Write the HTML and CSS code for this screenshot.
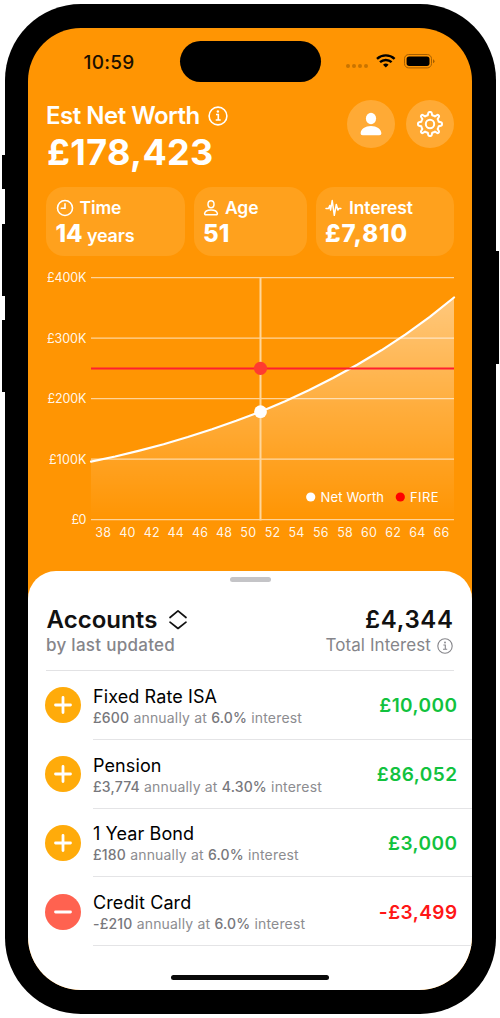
FILE: index.html
```html
<!DOCTYPE html>
<html lang="en">
<head>
<meta charset="utf-8">
<title>Net Worth</title>
<link rel="stylesheet" href="styles.css">
</head>
<body>
<main class="phone">
  <i class="key key-action"></i><i class="key key-up"></i><i class="key key-down"></i><i class="key key-power"></i>
  <div class="screen">
    <header class="status">
      <time class="clock">10:59</time>
      <div class="island"></div>
      <div class="indicators">
        <svg width="90" height="16" viewBox="0 0 90 16">
          <g fill="#c97400"><circle cx="2" cy="13" r="2"/><circle cx="8" cy="13" r="2"/><circle cx="14" cy="13" r="2"/><circle cx="20" cy="13" r="2"/></g>
          <g fill="none" stroke="#000" stroke-width="2.4"><path d="M31 5.800a13 13 0 0 1 17.600 0"/><path d="M34 9.200a8.600 8.600 0 0 1 11.600 0"/></g>
          <path d="M39.800 14.500l-2.800-2.800a4.300 4.300 0 0 1 5.600 0z" fill="#000"/>
          <rect x="58.500" y="1.500" width="27" height="13.400" rx="4.200" fill="none" stroke="#a65f00"/>
          <rect x="60.600" y="3.500" width="22.900" height="9.400" rx="2.600"/>
          <path d="M87 6.200v4q1.500-.6 1.500-2t-1.500-2z" fill="#a65f00"/>
        </svg>
      </div>
    </header>

    <section class="summary">
      <div>
        <h1 class="title"><span class="title-text">Est Net Worth</span>
          <svg width="20" height="20" viewBox="0 0 20 20" fill="none" stroke="#fff" stroke-width="1.600"><circle cx="10" cy="10" r="8.900"/><path d="M8 8.500h2.300v5.300M7.700 14h5"/><circle cx="9.900" cy="5.500" r="1.200" fill="#fff" stroke="none"/></svg>
        </h1>
        <p class="worth">£178,423</p>
      </div>
      <div class="actions">
        <button class="round" aria-label="Profile"><svg width="48" height="48" viewBox="0 0 48 48" fill="#fff"><ellipse cx="24" cy="18.500" rx="5.100" ry="5.700"/><path d="M15.700 35.200q-2.300 0-2.100-2c.3-4.100 4.700-7.200 10.400-7.200s10.100 3.100 10.400 7.200q.2 2-2.100 2z"/></svg></button>
        <button class="round" aria-label="Settings"><svg width="48" height="48" viewBox="0 0 48 48" fill="none" stroke="#fff" stroke-width="2" stroke-linejoin="round"><circle cx="24" cy="24" r="4.200"/><path id="gear" d="M22.300 13Q22.500 12 23.400 12h1.200Q25.500 12 25.700 13L26.200 15.300Q28 15.700 29 16.400L31 15.100Q31.800 14.600 32.500 15.300L32.800 15.500Q33.400 16.200 32.900 17L31.600 19Q32.300 20 32.700 21.800L35 22.300Q36 22.500 36 23.400v1.200Q36 25.500 35 25.700L32.700 26.200Q32.300 28 31.600 29L32.900 31Q33.400 31.800 32.700 32.500L32.500 32.700Q31.800 33.400 31 32.900L29 31.600Q28 32.300 26.200 32.700L25.700 35Q25.500 36 24.600 36h-1.200Q22.500 36 22.300 35L21.800 32.700Q20 32.300 19 31.600L17 32.900Q16.200 33.400 15.500 32.700L15.300 32.500Q14.600 31.800 15.100 31L16.400 29Q15.700 28 15.300 26.200L13 25.700Q12 25.500 12 24.600v-1.200Q12 22.500 13 22.300L15.300 21.800Q15.700 20 16.400 19L15.100 17Q14.600 16.200 15.300 15.500L15.500 15.300Q16.200 14.600 17 15.100L19 16.400Q20 15.700 21.800 15.300z"/></svg></button>
      </div>
    </section>

    <section class="cards">
      <article class="card">
        <h2 class="card-label"><svg width="18" height="18" viewBox="0 0 18 18" fill="none" stroke="#fff" stroke-width="1.600" stroke-linecap="round"><circle cx="9" cy="9" r="7.500"/><path d="M9 4.700v4.600H5.300"/></svg><span class="t-time">Time</span></h2>
        <p class="card-value"><span class="v-time">14</span> <small>years</small></p>
      </article>
      <article class="card">
        <h2 class="card-label"><svg class="age-icon" width="16" height="18" viewBox="0 0 16 18" fill="none" stroke="#fff" stroke-width="1.500"><ellipse cx="8" cy="5.300" rx="3" ry="3.500"/><path d="M2.900 15.700q-1.400 0-1.300-1.200c.3-2.200 2.800-3.600 6.400-3.600s6.100 1.400 6.400 3.600q.1 1.200-1.300 1.200z"/></svg><span class="t-age">Age</span></h2>
        <p class="card-value">51</p>
      </article>
      <article class="card">
        <h2 class="card-label"><svg width="18" height="18" viewBox="0 0 18 18" fill="none" stroke="#fff" stroke-width="1.500" stroke-linejoin="round" stroke-linecap="round"><path d="M1 9.500h2.600l1.200-3 .8 4.500L7.200 1.500 9.300 16.300 11.300 5.500l1.600 5.500 1-1.500h2"/></svg><span class="t-interest">Interest</span></h2>
        <p class="card-value v-interest">£7,810</p>
      </article>
    </section>

    <svg class="chart" width="416" height="280" viewBox="44 265 416 280">
      <defs><linearGradient id="area" x1="0" y1="297" x2="0" y2="519" gradientUnits="userSpaceOnUse"><stop offset="0" stop-color="#fff" stop-opacity=".48"/><stop offset=".5" stop-color="#fff" stop-opacity=".23"/><stop offset="1" stop-color="#fff" stop-opacity="0"/></linearGradient></defs>
      <path fill="url(#area)" d="M91 461.600L115.200 456.500 139.400 450.600 163.600 444.200 187.800 437 212 429.200 236.200 420.800 260.400 411.700 284.600 401.500 308.800 390.300 333 378 357.200 364.700 381.400 350.300 405.600 334.300 429.800 316.900 454 297.500V519.500H91z"/>
      <path class="grid" d="M91 277.700H454M91 338.200H454M91 398.700H454M91 459.200H454M91 519.700H454"/>
      <path d="M260.500 277V520.500" stroke="#ffd69a" stroke-width="2"/>
      <path d="M91 461.600L115.200 456.500 139.400 450.600 163.600 444.200 187.800 437 212 429.200 236.200 420.800 260.400 411.700 284.600 401.500 308.800 390.300 333 378 357.200 364.700 381.400 350.300 405.600 334.300 429.800 316.900 454 297.500" fill="none" stroke="#fff" stroke-width="2.200" stroke-linecap="round" stroke-linejoin="round"/>
      <path d="M91 368.500H454" stroke="#ff1f30" stroke-width="2.200"/>
      <circle cx="260.500" cy="368.300" r="6.600" fill="#ff3b30"/><circle cx="260.500" cy="411.700" r="6.400" fill="#fff"/>
      <g class="axis" text-anchor="end"><text x="86.500" y="282.200" textLength="39.500">£400K</text><text x="86.500" y="342.700" textLength="39.500">£300K</text><text x="86.500" y="403.200" textLength="39">£200K</text><text x="86.500" y="463.700" textLength="37.500">£100K</text><text x="86.500" y="524.200" textLength="15">£0</text></g>
      <g class="axis" text-anchor="middle"><text x="103.300" y="536.600">38</text><text x="127.500" y="536.600">40</text><text x="151.700" y="536.600">42</text><text x="175.800" y="536.600">44</text><text x="200" y="536.600">46</text><text x="224.200" y="536.600">48</text><text x="248.300" y="536.600">50</text><text x="272.500" y="536.600">52</text><text x="296.600" y="536.600">54</text><text x="320.800" y="536.600">56</text><text x="345" y="536.600">58</text><text x="369.100" y="536.600">60</text><text x="393.200" y="536.600">62</text><text x="417.400" y="536.600">64</text><text x="441.500" y="536.600">66</text></g>
      <circle cx="310.700" cy="497" r="4.600" fill="#fff"/><text class="legend" x="320.500" y="501.500" textLength="63.500">Net Worth</text>
      <circle cx="400.300" cy="497" r="4.600" fill="#f00"/><text class="legend" x="410" y="501.500" textLength="28.500">FIRE</text>
    </svg>

    <section class="sheet">
      <div class="handle"></div>
      <div class="sheet-head">
        <div>
          <h2 class="heading"><span class="accounts">Accounts</span><svg width="20" height="22" viewBox="0 0 20 22" fill="none" stroke="#111" stroke-width="1.700" stroke-linecap="round" stroke-linejoin="round"><path d="M2 8.500l8-6.700 8 6.700M2 13.200l8 6.300L18 13.200"/></svg></h2>
          <p class="sub s-left">by last updated</p>
        </div>
        <div class="right">
          <p class="heading h-total">£4,344</p>
          <p class="sub"><span class="s-right">Total Interest</span><svg width="16" height="16" viewBox="0 0 16 16" fill="none" stroke="#85858a" stroke-width="1.100"><circle cx="8" cy="8" r="7.200"/><path d="M6.400 7h1.900v4.200M6 11.300h4.200"/><circle cx="8" cy="4.500" r=".9" fill="#85858a" stroke="none"/></svg></p>
        </div>
      </div>
      <ul class="list">
        <li class="row"><svg class="badge" viewBox="0 0 36 36"><circle cx="18" cy="18" r="18" fill="#ffab0a"/><path d="M10.500 18h15M18 10.500v15"/></svg><div class="body"><div><h3 class="name">Fixed Rate ISA</h3><p class="note"><b>£600</b> annually at <b>6.0%</b> interest</p></div><span class="amount">£10,000</span></div></li>
        <li class="row"><svg class="badge" viewBox="0 0 36 36"><circle cx="18" cy="18" r="18" fill="#ffab0a"/><path d="M10.500 18h15M18 10.500v15"/></svg><div class="body"><div><h3 class="name">Pension</h3><p class="note"><b>£3,774</b> annually at <b>4.30%</b> interest</p></div><span class="amount">£86,052</span></div></li>
        <li class="row"><svg class="badge" viewBox="0 0 36 36"><circle cx="18" cy="18" r="18" fill="#ffab0a"/><path d="M10.500 18h15M18 10.500v15"/></svg><div class="body"><div><h3 class="name">1 Year Bond</h3><p class="note"><b>£180</b> annually at <b>6.0%</b> interest</p></div><span class="amount">£3,000</span></div></li>
        <li class="row"><svg class="badge" viewBox="0 0 36 36"><circle cx="18" cy="18" r="18" fill="#ff6250"/><path d="M10.500 18h15"/></svg><div class="body"><div><h3 class="name">Credit Card</h3><p class="note"><b>-£210</b> annually at <b>6.0%</b> interest</p></div><span class="amount debt">-£3,499</span></div></li>
      </ul>
      <div class="home"></div>
    </section>
  </div>
</main>
</body>
</html>
```

FILE: styles.css
```css
* { box-sizing: border-box; margin: 0; padding: 0; }
body { background: #fff; font-family: Inter, "Liberation Sans", sans-serif; color: #000; }
svg { display: block; flex: none; }
.phone { position: relative; width: 491px; height: 1010px; margin: 4px 0 4px 4.500px; padding: 24px 23.500px; background: #000; border-radius: 76px; }
.key { position: absolute; left: -3px; width: 5px; background: #000; }
.key-action { top: 151px; height: 34px; }
.key-up { top: 220px; height: 72px; }
.key-down { top: 316px; height: 72px; }
.key-power { left: auto; right: -3.500px; top: 247px; height: 113px; }
.screen { width: 444px; height: 962px; border-radius: 53px; background: #ff9503; overflow: hidden; display: flex; flex-direction: column; }

.status { height: 66px; padding: 13px 36px 0 55.500px; display: grid; grid-template-columns: 96px 141px 1fr; flex: none; }
.clock { font-size: 19px; line-height: 23px; font-weight: 500; padding-top: 10px; color: #1b1000; letter-spacing: .25px; }
.island { height: 41px; border-radius: 21px; background: #000; }
.indicators { padding: 12px 0 0 25px; }

.summary { height: 93px; padding: 0 18px; display: flex; justify-content: space-between; flex: none; color: #fff; }
.title { display: flex; align-items: center; gap: 8px; font-size: 24px; line-height: 30px; font-weight: 600; padding-top: 7px; }
.title-text { letter-spacing: -.5px; }
.worth { font-size: 36px; line-height: 42px; font-weight: 700; margin-top: 0; padding-left: 1px; letter-spacing: .35px; }
.actions { display: flex; gap: 11px; padding-top: 6px; }
.round { width: 48px; height: 48px; border: 0; border-radius: 50%; background: #ffaa35; }

.cards { height: 69px; margin: 0 18px; display: grid; grid-template-columns: 138.500px 113px 138.500px; grid-template-rows: 69px; gap: 9px; flex: none; color: #fff; }
.card { background: #ffa11d; border-radius: 18px; padding: 9px 9.500px; }
.card-label { display: flex; align-items: center; gap: 6px; font-size: 17.500px; line-height: 23px; font-weight: 600; letter-spacing: -.1px; }
.card-value { font-size: 24px; line-height: 29px; font-weight: 800; }
.card-value small { font-size: 18px; line-height: 1; font-weight: 600; letter-spacing: -.2px; margin-left: -1px; }
.v-interest { letter-spacing: .9px; }

.chart { margin: 9px 0 0 16px; }
.chart .grid { fill: none; stroke: #fff; stroke-opacity: .6; stroke-width: 1.300; }
.chart .axis { font-size: 12.500px; fill: #fff; fill-opacity: .93; letter-spacing: .2px; }
.chart .legend { font-size: 13px; fill: #fff; }

.sheet { flex: none; height: 419px; margin-top: 26px; background: #fff; border-radius: 28px 28px 0 0; display: flex; flex-direction: column; }
.handle { width: 41px; height: 5px; margin: 6px auto 0; border-radius: 3px; background: #c4c4c7; flex: none; }
.sheet-head { height: 89px; margin: 0 18px; padding-top: 23px; border-bottom: 1px solid #e2e2e4; display: flex; justify-content: space-between; flex: none; }
.heading { display: flex; align-items: center; gap: 11px; font-size: 24px; line-height: 30px; font-weight: 600; color: #111; }
.sub { display: flex; align-items: center; gap: 6px; font-size: 17px; line-height: 21px; color: #85858a; font-weight: 500; }
.accounts { padding-left: .5px; letter-spacing: .05px; }
.h-total { letter-spacing: .65px; margin-right: -.6px; }
.s-left { letter-spacing: .28px; }
.s-right { letter-spacing: .08px; }
.right { display: flex; flex-direction: column; align-items: flex-end; padding-right: 1px; }
.right .sub { font-weight: 400; }
.list { list-style: none; padding-left: 17px; }
.row { display: flex; align-items: center; height: 68.800px; }
.badge { width: 36px; height: 36px; stroke: #fff; stroke-width: 2.800; stroke-linecap: round; }
.badge circle { stroke: none; }
.body { flex: 1; height: 100%; margin-left: 12px; padding: 2px 15px 0 0; border-bottom: 1px solid #e4e4e6; display: flex; align-items: center; justify-content: space-between; }
.name { font-size: 18px; line-height: 22px; font-weight: 400; letter-spacing: .1px; padding-top: 1px; }
.note { font-size: 14px; line-height: 19px; color: #8c8c90; letter-spacing: .18px; }
.note b { font-weight: 500; color: #77777c; }
.amount { font-size: 19px; font-weight: 600; color: #12c23e; letter-spacing: .45px; margin-right: -.5px; }
.debt { color: #ff1616; }
.home { width: 158px; height: 5px; margin: 29px auto 0; border-radius: 3px; background: #090909; }
```
